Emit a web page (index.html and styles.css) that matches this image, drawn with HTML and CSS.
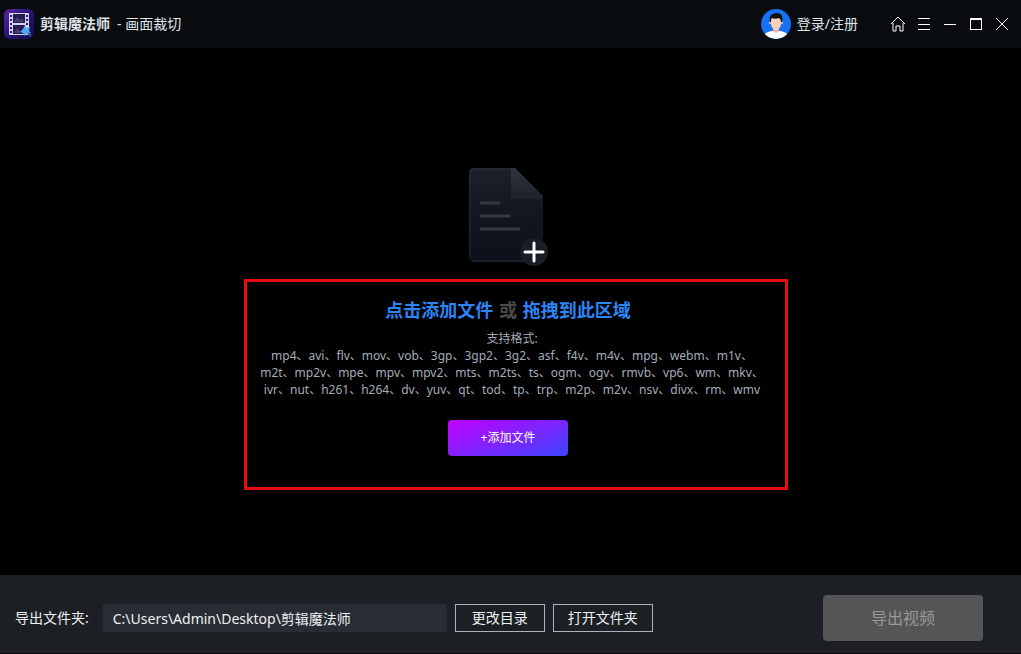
FILE: index.html
```html
<!DOCTYPE html>
<html lang="zh-CN">
<head>
  <meta charset="UTF-8" />
  <meta name="viewport" content="width=device-width, initial-scale=1" />
  <title>剪辑魔法师 - 画面裁切</title>
  <link rel="stylesheet" href="styles.css">
</head>
<body>
  <header class="titlebar">
    <svg class="logo" viewBox="0 0 30 30" aria-hidden="true">
      <defs>
        <linearGradient id="logo-bg" x1="0" y1="0" x2="1" y2="1">
          <stop offset="0" stop-color="#5a27a8" />
          <stop offset="0.5" stop-color="#2b1478" />
          <stop offset="1" stop-color="#140a45" />
        </linearGradient>
      </defs>
      <rect width="30" height="30" rx="6" fill="url(#logo-bg)" />
      <rect x="5" y="4" width="20" height="22" rx="1" fill="#d5d2ee" />
      <path d="M9 5h12v9H9zM9 16h12v9H9z" fill="#251d52" />
      <path d="M10 13l3-5 3 3 2-2 2 4zM10 24l3-5 3 3v2z" fill="#453a72" />
      <path d="M6 6h2v2H6zM6 10h2v2H6zM6 14h2v2H6zM6 18h2v2H6zM6 22h2v2H6zM22 6h2v2h-2zM22 10h2v2h-2zM22 14h2v2h-2z" fill="#2b1d63" />
      <path d="M21 16l1 3 4-1-1 4 2 2-4 1-3 2-1-3-3-1 3-3z" fill="#4fa4f0" />
      <path d="M24 24l3 3" stroke="#2f5d8c" stroke-width="2" />
    </svg>
    <h1 class="app-name">剪辑魔法师</h1>
    <span class="page-name">- 画面裁切</span>

    <a href="#" class="login">
      <svg class="avatar" viewBox="0 0 30 30" aria-hidden="true">
        <defs>
          <clipPath id="avatar-clip"><circle cx="15" cy="15" r="15" /></clipPath>
        </defs>
        <g clip-path="url(#avatar-clip)">
          <rect width="30" height="30" fill="#1672f5" />
          <path d="M2 30c0-5 3-7 9-8h8c6 1 9 3 9 8z" fill="#fff" />
          <path d="M12 17h6v5c-1 2-5 2-6 0z" fill="#f2b79f" />
          <path d="M10 9h10v6c0 3-2 5-5 5s-5-2-5-5z" fill="#fccfb8" />
          <circle cx="9" cy="14" r="1" fill="#fccfb8" />
          <circle cx="21" cy="14" r="1" fill="#fccfb8" />
          <path d="M9 13c-1-4 0-7 3-8 3-2 8-1 9 2 1 2 0 4 0 6h-1c0-2-1-3-2-4-2 1-5 1-7 0-1 1-1 2-1 4z" fill="#12100f" />
        </g>
      </svg>
      登录/注册
    </a>

    <div class="window-buttons">
      <button type="button" aria-label="主页">
        <svg viewBox="0 0 16 16"><path d="M1 8L8 1l7 7M3 7v8h3v-5h4v5h3V7" /></svg>
      </button>
      <button type="button" aria-label="菜单">
        <svg viewBox="0 0 16 16"><path class="crisp" d="M2 2.500h12M2 8.500h12M2 13.500h12" /></svg>
      </button>
      <button type="button" aria-label="最小化">
        <svg viewBox="0 0 16 16"><path class="crisp" d="M2 8.500h12" /></svg>
      </button>
      <button type="button" aria-label="最大化">
        <svg viewBox="0 0 16 16"><path class="crisp" d="M2.500 2.500h11v11h-11zM2 3.500h12" /></svg>
      </button>
      <button type="button" aria-label="关闭">
        <svg viewBox="0 0 16 16"><path d="M2 2l12 12M14 2L2 14" /></svg>
      </button>
    </div>
  </header>

  <main class="drop-area">
    <svg class="file-icon" viewBox="0 0 80 98" aria-hidden="true">
      <defs>
        <linearGradient id="page-fill" x1="0" y1="0" x2="0" y2="1">
          <stop offset="0" stop-color="#1c2129" />
          <stop offset="0.5" stop-color="#12161e" />
          <stop offset="1" stop-color="#0c1018" />
        </linearGradient>
        <linearGradient id="fold-fill" x1="0" y1="0" x2="0" y2="1">
          <stop offset="0" stop-color="#30353d" />
          <stop offset="1" stop-color="#1d2229" />
        </linearGradient>
      </defs>
      <path d="M4 0h42l28 29v65H4a4 4 0 0 1-4-4V4a4 4 0 0 1 4-4z" fill="url(#page-fill)" />
      <path d="M1 89V5a4 4 0 0 1 4-4h40M3 93h52" fill="none" stroke="#27313a" stroke-width="1" />
      <path d="M42 0h4l28 28v3H42z" fill="url(#fold-fill)" />
      <path d="M12 35h18M12 48h28M12 61h38" stroke="#343942" stroke-width="3" stroke-linecap="round" />
      <circle cx="65" cy="84" r="14" fill="#191e25" />
      <path d="M65 75v18M56 84h18" stroke="#fff" stroke-width="3" stroke-linecap="round" />
    </svg>

    <section class="add-box">
      <h2 class="add-title">
        <a href="#">点击添加文件</a>
        <span>或</span>
        <a href="#">拖拽到此区域</a>
      </h2>
      <p class="formats">
        支持格式:<br>
        mp4、avi、flv、mov、vob、3gp、3gp2、3g2、asf、f4v、m4v、mpg、webm、m1v、<br>
        m2t、mp2v、mpe、mpv、mpv2、mts、m2ts、ts、ogm、ogv、rmvb、vp6、wm、mkv、<br>
        ivr、nut、h261、h264、dv、yuv、qt、tod、tp、trp、m2p、m2v、nsv、divx、rm、wmv
      </p>
      <button type="button" class="add-btn">+添加文件</button>
    </section>
  </main>

  <footer class="export-bar">
    <label for="export-path">导出文件夹:</label>
    <input type="text" id="export-path" class="path" value="C:\Users\Admin\Desktop\剪辑魔法师" readonly>
    <button type="button" class="outline-btn">更改目录</button>
    <button type="button" class="outline-btn wide">打开文件夹</button>
    <button type="button" class="export-btn" disabled>导出视频</button>
  </footer>
</body>
</html>
```
FILE: styles.css
```css
* {
  margin: 0;
  padding: 0;
  box-sizing: border-box;
}

body {
  display: flex;
  flex-direction: column;
  min-height: 100vh;
  font-family: "Noto Sans", "Noto Sans CJK SC", sans-serif;
  font-size: 14px;
  line-height: 20px;
  background-color: #000;
  color: #dfe3e6;
}

button,
input {
  font: inherit;
  color: inherit;
}

button {
  cursor: pointer;
}

a {
  color: inherit;
  text-decoration: none;
}

/* Title bar */
.titlebar {
  display: flex;
  align-items: center;
  height: 48px;
  padding: 0 11px 0 4px;
  background-color: #080c0f;
}

.logo {
  width: 30px;
  height: 30px;
  margin-right: 6px;
}

.app-name {
  font-size: 14px;
  font-weight: 600;
  margin-right: 7px;
}

.login {
  display: flex;
  align-items: center;
  gap: 6px;
  margin-left: auto;
}

.avatar {
  width: 30px;
  height: 30px;
}

.window-buttons {
  display: flex;
  gap: 10px;
  margin-left: 32px;
}

.window-buttons button {
  width: 16px;
  height: 16px;
  background: none;
  border: none;
}

.window-buttons svg {
  display: block;
  width: 16px;
  height: 16px;
  fill: none;
  stroke: #fff;
}

.crisp {
  shape-rendering: crispEdges;
}

/* Drop area */
.drop-area {
  flex: 1;
  display: flex;
  flex-direction: column;
  align-items: center;
  justify-content: center;
  padding-top: 34px;
  padding-left: 11px;
}

.file-icon {
  width: 80px;
  height: 98px;
  margin: 0 14px 13px 0;
}

.add-box {
  display: flex;
  flex-direction: column;
  align-items: center;
  width: 544px;
  max-width: 100%;
  padding: 16px 16px 31px 0;
  border: 3px solid #e60f0f;
}

.add-title {
  font-size: 18px;
  line-height: 24px;
  font-weight: 700;
  color: #2a86f5;
}

.add-title span {
  margin: 0 1px;
  color: #4a4a4a;
}

.formats {
  margin: 8px 0 22px 8px;
  font-size: 12px;
  line-height: 17px;
  text-align: center;
  white-space: nowrap;
  color: #a3adba;
}

.add-btn {
  width: 120px;
  height: 36px;
  border: none;
  border-radius: 4px;
  font-size: 12px;
  color: #fff;
  background: linear-gradient(160deg, #c000ff, #3f45ff);
}

/* Export bar */
.export-bar {
  display: flex;
  align-items: center;
  gap: 8px;
  padding: 20px 38px 12px 15px;
  background-color: #1c2024;
  border-bottom: 1px solid #0a0c0e;
  color: #eef0f2;
}

.export-bar label {
  margin-right: 6px;
}

.path {
  width: 344px;
  height: 28px;
  padding: 0 10px;
  border: none;
  background-color: #282d34;
}

.outline-btn {
  width: 90px;
  height: 28px;
  border: 1px solid #a9b3bf;
  background: none;
}

.outline-btn.wide {
  width: 100px;
}

.export-btn {
  width: 160px;
  height: 46px;
  margin-left: auto;
  border: none;
  border-radius: 4px;
  font-size: 16px;
  color: #989898;
  background-color: #555;
}
```
